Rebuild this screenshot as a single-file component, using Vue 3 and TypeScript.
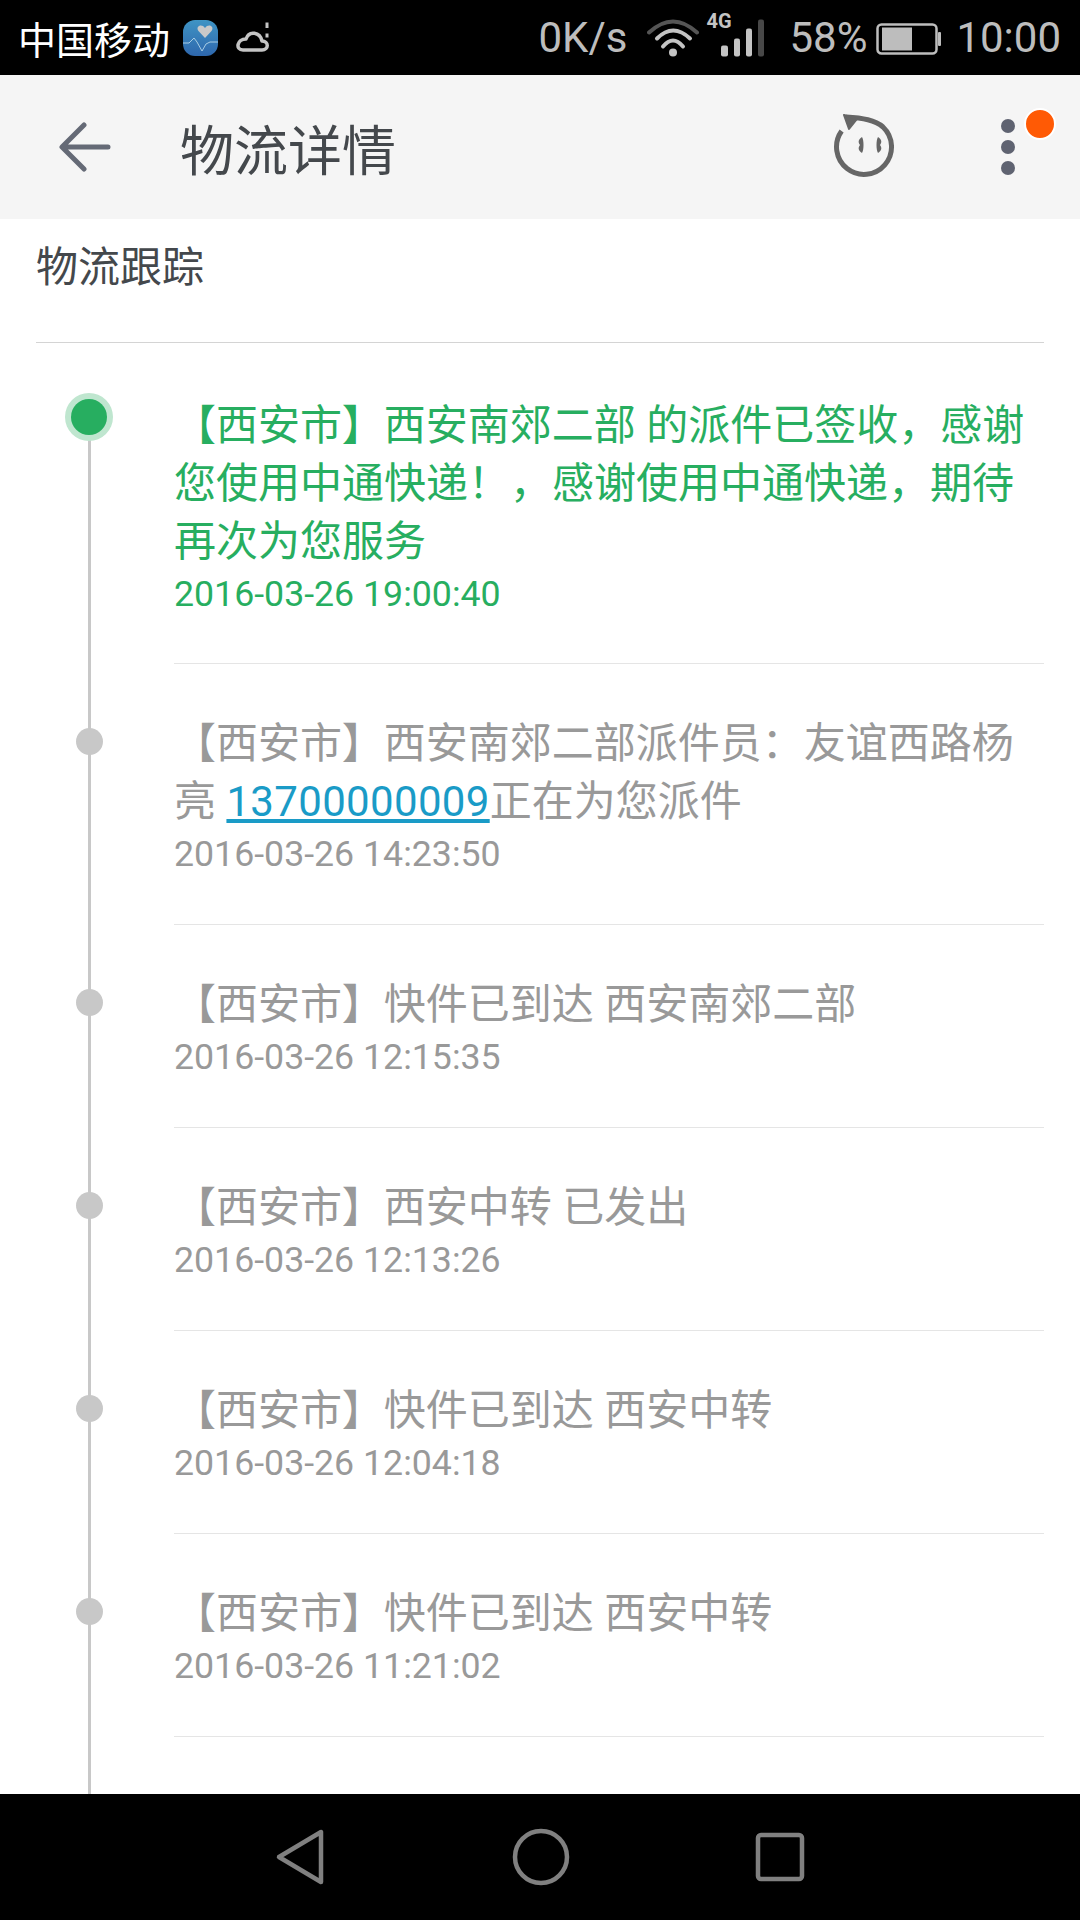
<script setup lang="ts">
interface TrackItem {
  text: string
  phone?: string
  after?: string
  time: string
}

const city = '【 西安市 】'

const items: TrackItem[] = [
  { text: '西安南郊二部 的派件已签收，感谢您使用中通快递！，感谢使用中通快递，期待再次为您服务', time: '2016-03-26 19:00:40' },
  { text: '西安南郊二部派件员：友谊西路杨亮 ', phone: '13700000009', after: '正在为您派件', time: '2016-03-26 14:23:50' },
  { text: '快件已到达 西安南郊二部', time: '2016-03-26 12:15:35' },
  { text: '西安中转 已发出', time: '2016-03-26 12:13:26' },
  { text: '快件已到达 西安中转', time: '2016-03-26 12:04:18' },
  { text: '快件已到达 西安中转', time: '2016-03-26 11:21:02' },
]
</script>

<template>
  <div class="page">
    <div class="status-bar">
      <span class="carrier">中国移动</span>
      <svg class="health" width="35" height="36" viewBox="0 0 35 36">
        <defs>
          <linearGradient id="healthBg" x1="0" y1="0" x2="0" y2="1">
            <stop offset="0" stop-color="#3f94c4" />
            <stop offset="1" stop-color="#2e67ad" />
          </linearGradient>
        </defs>
        <rect width="35" height="36" rx="12" fill="url(#healthBg)" />
        <path d="M22 18 L15.500 11 C12 6 19 3 22 8 C25 3 32 6 28.500 11 Z" fill="#c9c9c9" />
        <path d="M0 23 H6 L11 18 L14 22 L19 31 L23 24 L27 22 H35" fill="none" stroke="#a8cde4" stroke-width="1" />
      </svg>
      <svg class="weather" width="36" height="36" viewBox="0 0 36 36">
        <path d="M9 30 H28 C35 30 35 21 28 21 C26 12 15 10 12 19 C3 19 1 30 9 30 Z" fill="none" stroke="#c4c4c4" stroke-width="3.500" stroke-linejoin="round" />
        <path d="M33 2.500 V8 M33 13.500 V17.500" stroke="#c4c4c4" stroke-width="3" />
      </svg>
      <span class="status-right">
        <span class="speed">0K/s</span>
        <svg class="wifi" width="52" height="40" viewBox="0 0 52 40">
          <path d="M2 14.500 Q26 -7.500 50 14.500" fill="none" stroke="#555" stroke-width="4" stroke-linecap="round" />
          <path d="M10 20.500 Q26 4.500 43 20.500" fill="none" stroke="#c4c4c4" stroke-width="4" stroke-linecap="round" />
          <path d="M16 28.500 Q26 16.500 36 28.500" fill="none" stroke="#c4c4c4" stroke-width="4" stroke-linecap="round" />
          <circle cx="26" cy="34.500" r="4" fill="#c4c4c4" />
        </svg>
        <span class="signal">
          <span class="net">4G</span>
          <svg width="44" height="40" viewBox="0 0 44 40">
            <rect x="0" y="27.500" width="7" height="11" rx="2" fill="#c4c4c4" />
            <rect x="13" y="20.500" width="6" height="18" rx="2" fill="#c4c4c4" />
            <rect x="25" y="10.500" width="6" height="28" rx="2" fill="#c4c4c4" />
            <rect x="37" y="1.500" width="6" height="37" rx="2" fill="#484848" />
          </svg>
        </span>
        <span class="percent">58%</span>
        <svg class="battery" width="66" height="34" viewBox="0 0 66 34">
          <rect x="1.500" y="3.500" width="59" height="29" rx="4" fill="none" stroke="#bdbdbd" stroke-width="2.500" />
          <rect x="6" y="6.500" width="30" height="23" fill="#bdbdbd" />
          <rect x="62" y="11" width="3" height="14" rx="1" fill="#bdbdbd" />
        </svg>
        <span class="clock">10:00</span>
      </span>
    </div>

    <div class="app-bar">
      <svg class="back" width="52" height="50" viewBox="0 0 52 50">
        <path d="M49 25 H4 M25 3 L3 25 L25 47" fill="none" stroke="#656a76" stroke-width="5" stroke-linecap="round" stroke-linejoin="round" />
      </svg>
      <h1 class="title">物流详情</h1>
      <svg class="face" width="62" height="66" viewBox="0 0 62 66">
        <path d="M8.600 17 A27.500 27.500 0 1 0 50 13 C42 6 30 4 13 3" fill="none" stroke="#666" stroke-width="5" />
        <path d="M11 1 L24 5 L16 15 Z" fill="#666" stroke="#666" stroke-width="2" stroke-linejoin="round" />
        <path d="M29 23 C25 26 25 28 27 31 C25 34 25 36 29 39 C31 36 31 26 29 23 Z" fill="#666" />
        <path d="M45 23 C49 26 49 28 47 31 C49 34 49 36 45 39 C43 36 43 26 45 23 Z" fill="#666" />
      </svg>
      <div class="more">
        <i></i><i></i><i></i>
        <b class="badge"></b>
      </div>
    </div>

    <div class="content">
      <div class="section-title">物流跟踪</div>
      <div class="track">
        <div
          v-for="(item, index) in items"
          :key="item.time"
          class="row"
          :class="{ latest: index === 0 }"
        >
          <div class="rail"><span class="dot"></span></div>
          <div class="body">
            <p class="text"><span class="city">{{ city }}</span>{{ item.text }}<a v-if="item.phone" class="phone">{{ item.phone }}</a>{{ item.after }}</p>
            <p class="time">{{ item.time }}</p>
          </div>
        </div>
        <div class="row tail"><div class="rail"></div></div>
      </div>
    </div>

    <div class="nav-bar">
      <svg width="52" height="58" viewBox="0 0 52 58">
        <path d="M46 4 V54 L4 29 Z" fill="none" stroke="#808080" stroke-width="4.500" stroke-linejoin="round" />
      </svg>
      <svg width="58" height="58" viewBox="0 0 58 58">
        <circle cx="29" cy="29" r="26" fill="none" stroke="#808080" stroke-width="4.500" />
      </svg>
      <svg width="50" height="50" viewBox="0 0 50 50">
        <rect x="3" y="3" width="44" height="44" rx="3" fill="none" stroke="#808080" stroke-width="4.500" />
      </svg>
    </div>
  </div>
</template>

<style scoped>
.page {
  width: 1080px;
  height: 1920px;
  display: flex;
  flex-direction: column;
  overflow: hidden;
  background: #fff;
  font-family: Roboto, "Noto Sans CJK SC", sans-serif;
}

.status-bar {
  height: 75px;
  flex: none;
  background: #000;
  display: flex;
  align-items: center;
  padding: 0 19px 0 18px;
  color: #bdbdbd;
}
.carrier { color: #fff; font-size: 38px; }
.health { margin-left: 13px; }
.weather { margin-left: 16px; }
.status-right {
  margin-left: auto;
  display: flex;
  align-items: center;
  font-size: 42px;
}
.wifi { margin-left: 20px; }
.signal { position: relative; margin-left: 22px; display: flex; }
.net {
  position: absolute;
  left: -15px;
  top: -7px;
  font-size: 20px;
  line-height: 20px;
  font-weight: 700;
  color: #c4c4c4;
}
.percent { margin-left: 24px; }
.battery { margin-left: 9px; }
.clock { margin-left: 14px; }

.app-bar {
  height: 144px;
  flex: none;
  background: #f5f5f5;
  display: flex;
  align-items: center;
  padding: 0 20px 0 59px;
}
.title {
  margin: 0 0 0 69px;
  font-size: 54px;
  font-weight: 400;
  color: #44484c;
}
.face { margin-left: auto; margin-right: 106px; }
.more {
  position: relative;
  display: flex;
  flex-direction: column;
  gap: 7px;
  margin-right: 45px;
}
.more i {
  width: 14px;
  height: 14px;
  border-radius: 50%;
  background: #5f6371;
}
.badge {
  position: absolute;
  left: 23px;
  top: -11px;
  width: 28px;
  height: 28px;
  border-radius: 50%;
  background: #ff5a05;
  border: 2px solid #fff;
}

.content {
  flex: 1;
  min-height: 0;
  display: flex;
  flex-direction: column;
  overflow: hidden;
}
.section-title {
  height: 124px;
  flex: none;
  margin: 0 36px;
  padding-top: 20px;
  box-sizing: border-box;
  border-bottom: 1px solid #d4d4d4;
  font-size: 42px;
  line-height: 58px;
  color: #44484c;
}

.track {
  flex: 1;
  min-height: 0;
  display: flex;
  flex-direction: column;
}
.row { display: flex; flex: none; }
.rail {
  position: relative;
  width: 174px;
  flex: none;
  display: flex;
  justify-content: center;
  padding-left: 4px;
  box-sizing: border-box;
}
.rail::before {
  content: "";
  position: absolute;
  left: 88px;
  top: 0;
  bottom: 0;
  width: 3px;
  background: #c8c8c8;
}
.dot {
  position: relative;
  width: 27px;
  height: 27px;
  margin-top: 64px;
  border-radius: 50%;
  background: #c8c8c8;
}
.latest .rail::before { top: 65px; }
.latest .dot {
  width: 36px;
  height: 36px;
  margin-top: 56px;
  background: #27ae60;
  box-shadow: 0 0 0 6px #bfe6cf;
}
.tail { flex: 1; }

.body {
  flex: 1;
  margin-right: 36px;
  padding: 51px 0 47px;
  border-bottom: 1px solid #e5e5e5;
}
.latest .body { padding: 54px 0 46px; }
.text {
  margin: 0;
  font-size: 42px;
  line-height: 58px;
  color: #999;
}
.city { word-spacing: -0.25em; }
.time {
  margin: 0;
  font-size: 35.700px;
  line-height: 46px;
  color: #999;
}
.phone { color: #1a9bc7; text-decoration: underline; letter-spacing: 0.33px; }
.latest .text, .latest .time { color: #27ae60; }

.nav-bar {
  height: 126px;
  flex: none;
  background: #000;
  display: flex;
  align-items: center;
  justify-content: center;
  gap: 185px;
}
</style>
